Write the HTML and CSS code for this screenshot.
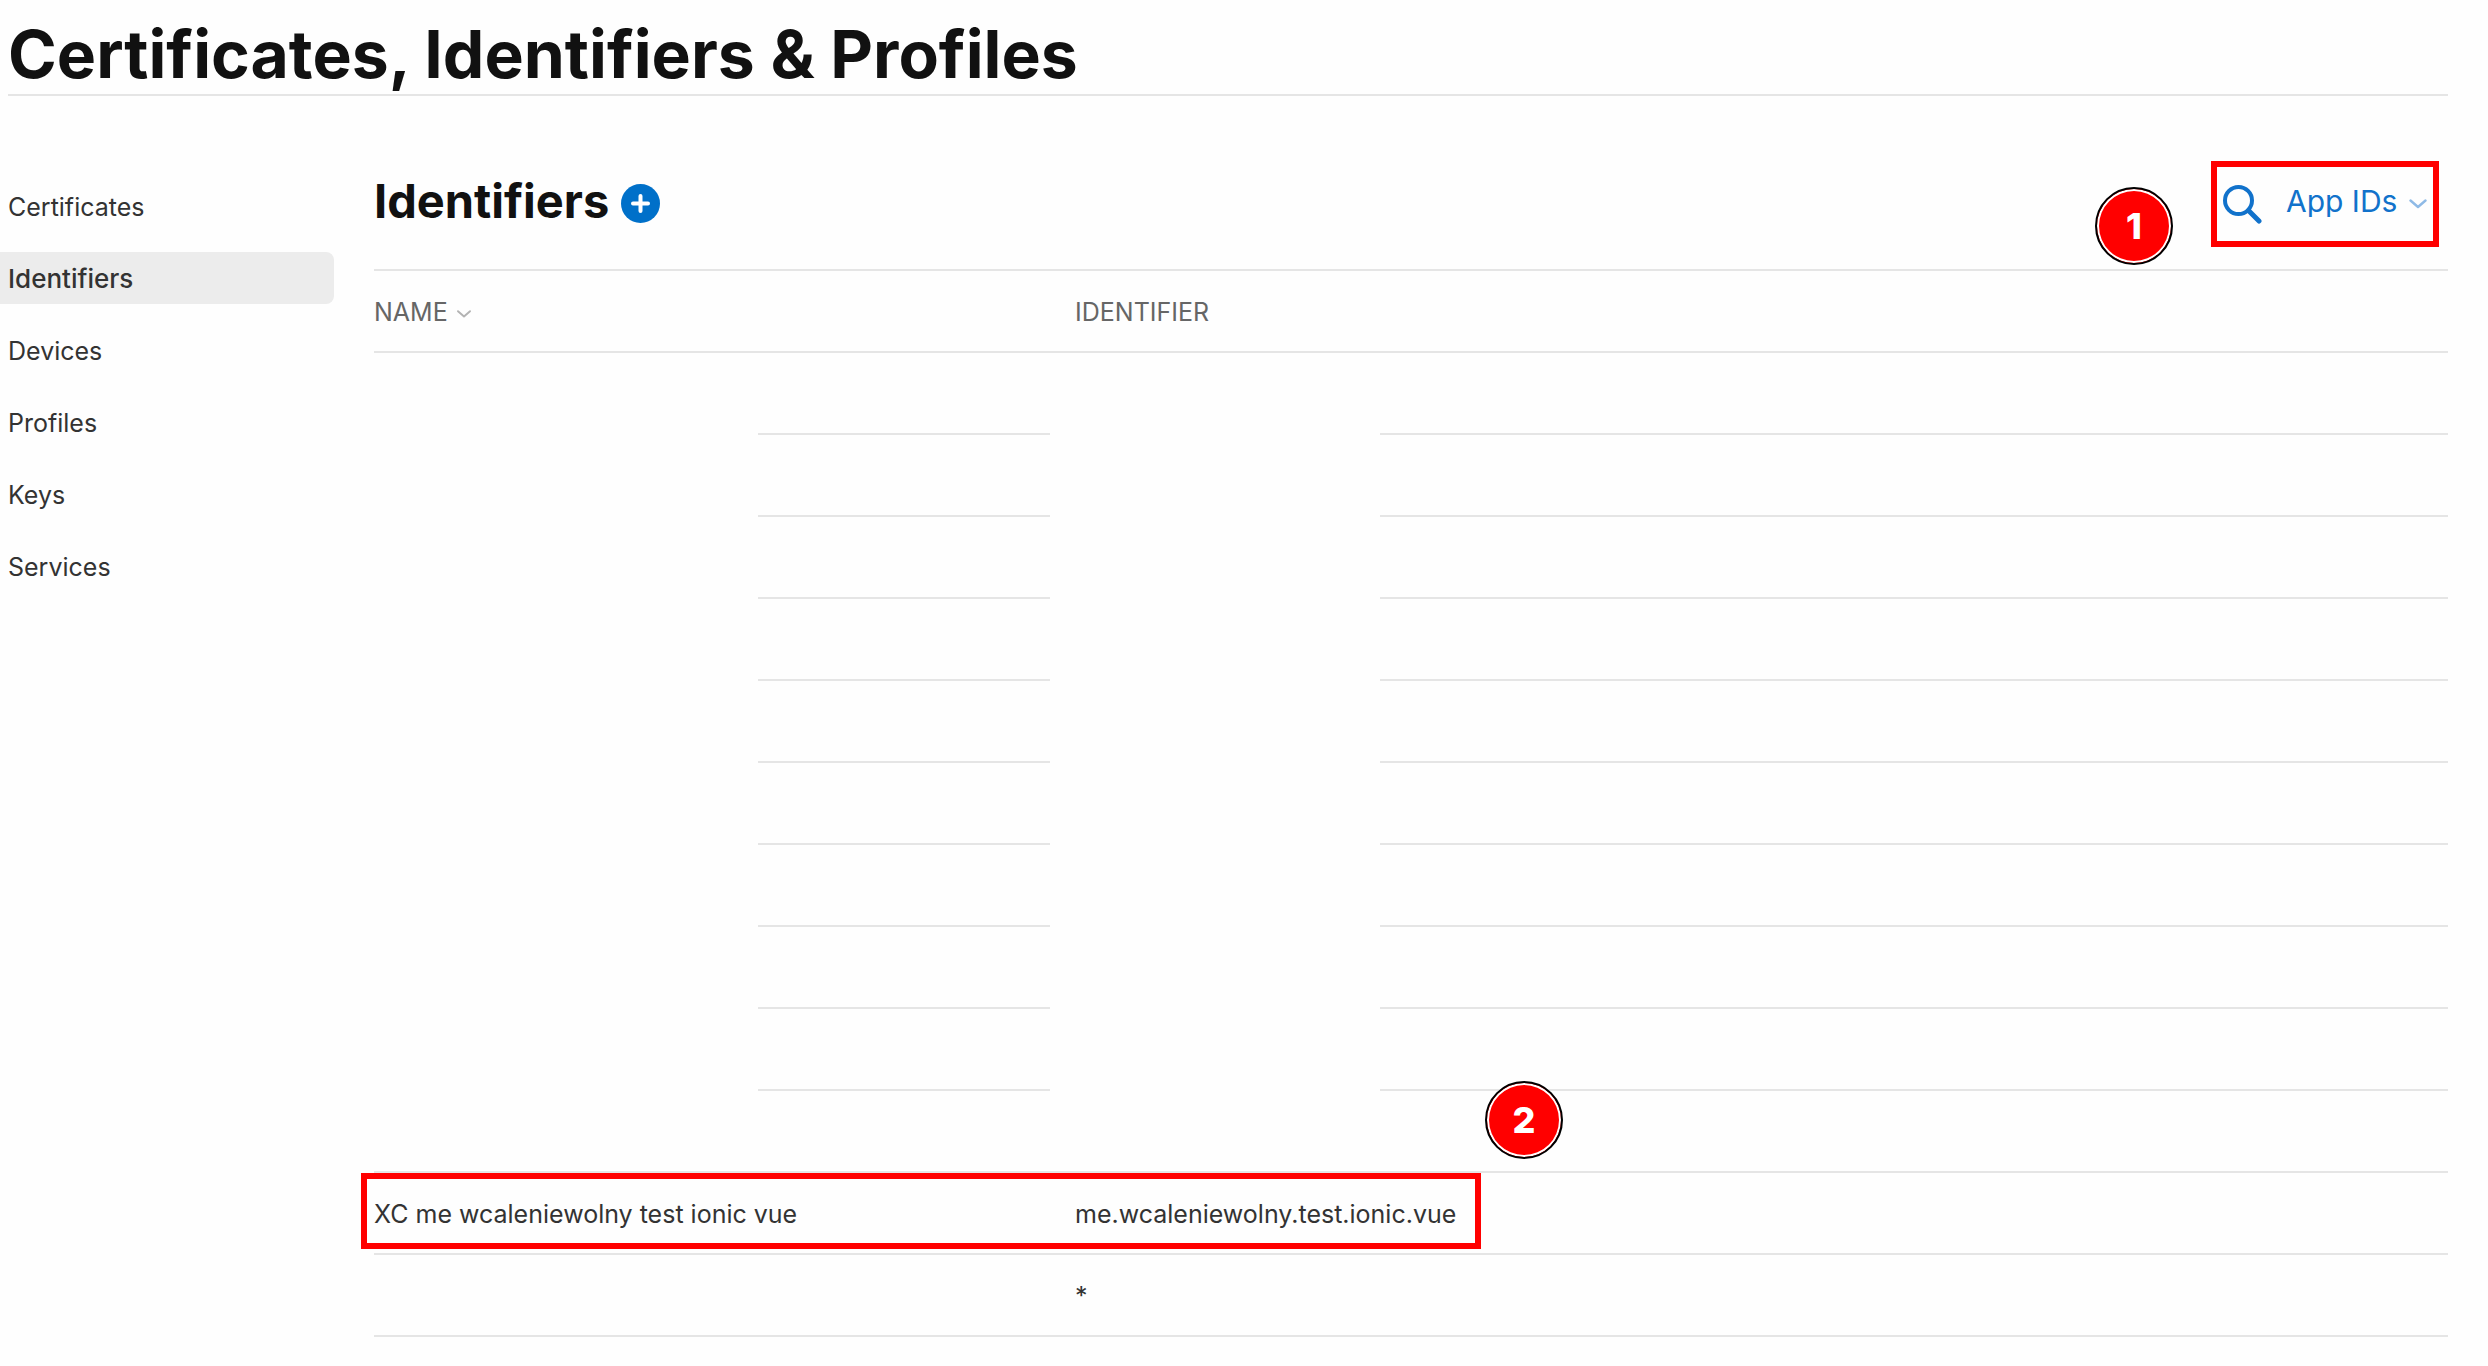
FILE: index.html
```html
<!DOCTYPE html>
<html lang="en">
<head>
<meta charset="utf-8">
<meta name="viewport" content="width=device-width, initial-scale=1">
<title>Certificates, Identifiers &amp; Profiles</title>
<link rel="stylesheet" href="styles.css">
</head>
<body>
<header class="page-header">
  <h1 class="page-title">Certificates, Identifiers &amp; Profiles</h1>
</header>
<div class="layout">
  <nav class="sidebar" aria-label="Resources">
    <a class="nav-link" href="#certificates">Certificates</a>
    <a class="nav-link is-current" href="#identifiers" aria-current="page">Identifiers</a>
    <a class="nav-link" href="#devices">Devices</a>
    <a class="nav-link" href="#profiles">Profiles</a>
    <a class="nav-link" href="#keys">Keys</a>
    <a class="nav-link" href="#services">Services</a>
  </nav>
  <main class="content">
    <div class="toolbar">
      <div class="heading">
        <h2 class="heading-text">Identifiers</h2>
        <button class="icon-button add" type="button" aria-label="Register a new identifier">
          <svg width="39" height="39" viewBox="0 0 39 39" aria-hidden="true">
            <circle cx="19.5" cy="19.5" r="19.5" fill="#0070c9"/>
            <path d="M19.5 12v15M12 19.5h15" fill="none" stroke="#fff" stroke-width="4" stroke-linecap="round"/>
          </svg>
        </button>
      </div>
      <div class="filters">
        <span class="badge badge-filter">1</span>
        <button class="icon-button" type="button" aria-label="Search">
          <svg width="39" height="39" viewBox="0 0 39 39" aria-hidden="true">
            <circle cx="15.5" cy="15.5" r="13.5" fill="none" stroke="#1172cb" stroke-width="4"/>
            <path d="M25.5 25.5 36 36" fill="none" stroke="#1172cb" stroke-width="5" stroke-linecap="round"/>
          </svg>
        </button>
        <div class="type-filter">
          <select class="type-select" aria-label="Identifier type">
            <option>App IDs</option>
          </select>
          <svg class="type-chevron" width="18" height="10" viewBox="0 0 18 10" aria-hidden="true">
            <path d="M1.5 1.5 9 8l7.500-6.500" fill="none" stroke="#8fbae6" stroke-width="2.400" stroke-linecap="round" stroke-linejoin="round"/>
          </svg>
        </div>
      </div>
    </div>
    <table class="table">
      <colgroup><col class="col-name"><col class="col-name-rest"><col class="col-id"><col></colgroup>
      <thead>
        <tr>
          <th colspan="2" scope="col">
            <button class="sort" type="button">NAME
              <svg width="14" height="8" viewBox="0 0 14 8" aria-hidden="true">
                <path d="M1 1.200 7 6.500l6-5.300" fill="none" stroke="#b3b3b3" stroke-width="1.900" stroke-linecap="round" stroke-linejoin="round"/>
              </svg>
            </button>
          </th>
          <th class="id-cell" colspan="2" scope="col">IDENTIFIER</th>
        </tr>
      </thead>
      <tbody>
        <tr><td class="hidden"></td><td></td><td class="hidden"></td><td></td></tr>
        <tr><td class="hidden"></td><td></td><td class="hidden"></td><td></td></tr>
        <tr><td class="hidden"></td><td></td><td class="hidden"></td><td></td></tr>
        <tr><td class="hidden"></td><td></td><td class="hidden"></td><td></td></tr>
        <tr><td class="hidden"></td><td></td><td class="hidden"></td><td></td></tr>
        <tr><td class="hidden"></td><td></td><td class="hidden"></td><td></td></tr>
        <tr><td class="hidden"></td><td></td><td class="hidden"></td><td></td></tr>
        <tr><td class="hidden"></td><td></td><td class="hidden"></td><td></td></tr>
        <tr><td class="hidden"></td><td></td><td class="hidden"></td><td></td></tr>
        <tr><td colspan="2"></td><td colspan="2"></td></tr>
        <tr>
          <td class="marked" colspan="2">XC me wcaleniewolny test ionic vue<span class="callout"><span class="badge badge-row">2</span></span></td>
          <td class="id-cell" colspan="2">me.wcaleniewolny.test.ionic.vue</td>
        </tr>
        <tr><td colspan="2"></td><td class="id-cell" colspan="2">*</td></tr>
      </tbody>
    </table>
  </main>
</div>
</body>
</html>
```
FILE: styles.css
```css
:root {
  --line: #e5e5e5;
  --text: #333;
  --heading: #111;
  --link: #1172cb;
  --mark: #f00;
}

* { box-sizing: border-box; }

body {
  margin: 0;
  background: #fefefe;
  color: var(--text);
  font: 25px/32px Inter, "Liberation Sans", sans-serif;
}

button,
select {
  margin: 0;
  padding: 0;
  border: 0;
  background: none;
  color: inherit;
  font: inherit;
}

.page-header {
  margin: 0 40px 0 8px;
  padding-top: 14px;
  border-bottom: 2px solid var(--line);
}

.page-title {
  margin: 0;
  color: var(--heading);
  font-size: 66px;
  font-weight: 700;
  line-height: 80px;
}

.layout {
  display: grid;
  grid-template-columns: 334px minmax(0, 1fr);
  column-gap: 40px;
  padding-right: 40px;
}

.sidebar {
  display: flex;
  flex-direction: column;
  gap: 20px;
  padding-top: 84px;
}

.nav-link {
  padding: 11px 8px 9px;
  border-radius: 0 8px 8px 0;
  color: inherit;
  text-decoration: none;
}

.nav-link.is-current {
  background: #ececec;
  font-size: 26px;
  font-weight: 500;
}

.toolbar {
  display: flex;
  justify-content: space-between;
  align-items: flex-start;
  padding: 65px 9px 22px 0;
}

.heading {
  display: flex;
  align-items: center;
  gap: 12px;
}

.heading-text {
  margin: 0;
  color: var(--heading);
  font-size: 47px;
  font-weight: 700;
  line-height: 80px;
}

.icon-button {
  display: block;
  width: 39px;
  height: 39px;
  line-height: 0;
}

.add { margin-top: 4px; }

.filters {
  position: relative;
  display: flex;
  align-items: center;
  gap: 24px;
  height: 86px;
  padding: 0 6px;
  border: 6px solid var(--mark);
}

.type-filter {
  display: grid;
  align-items: center;
  align-self: flex-start;
}

.type-select,
.type-chevron { grid-area: 1 / 1; }

.type-select {
  width: 141px;
  height: 68px;
  appearance: none;
  color: var(--link);
  font-size: 30px;
}

.type-chevron {
  justify-self: end;
  margin-top: 6px;
  pointer-events: none;
}

.table {
  width: 100%;
  border-top: 2px solid var(--line);
  border-spacing: 0;
  table-layout: fixed;
}

.col-name { width: 384px; }
.col-name-rest { width: 292px; }
.col-id { width: 330px; }

.table th,
.table td {
  height: 82px;
  padding: 2px 0 0;
  border-bottom: 2px solid var(--line);
  text-align: left;
  white-space: nowrap;
}

.table th {
  color: #666;
  font-weight: 400;
}

.table .hidden { border-bottom-color: transparent; }
.table .id-cell { padding-left: 25px; }
.table .marked { position: relative; }

.sort {
  display: flex;
  align-items: center;
  gap: 9px;
}

.sort svg { margin-top: 4px; }

.callout {
  position: absolute;
  top: 0;
  left: -13px;
  width: 1120px;
  height: 76px;
  border: 6px solid var(--mark);
  pointer-events: none;
}

.badge {
  position: absolute;
  width: 78px;
  height: 78px;
  border: 2px solid #000;
  border-radius: 50%;
  background: var(--mark);
  box-shadow: inset 0 0 0 2px #fff;
  color: #fff;
  font-size: 36px;
  font-weight: 800;
  line-height: 74px;
  text-align: center;
}

.badge-filter {
  top: 20px;
  right: 260px;
}

.badge-row {
  right: -88px;
  bottom: 84px;
}
```
